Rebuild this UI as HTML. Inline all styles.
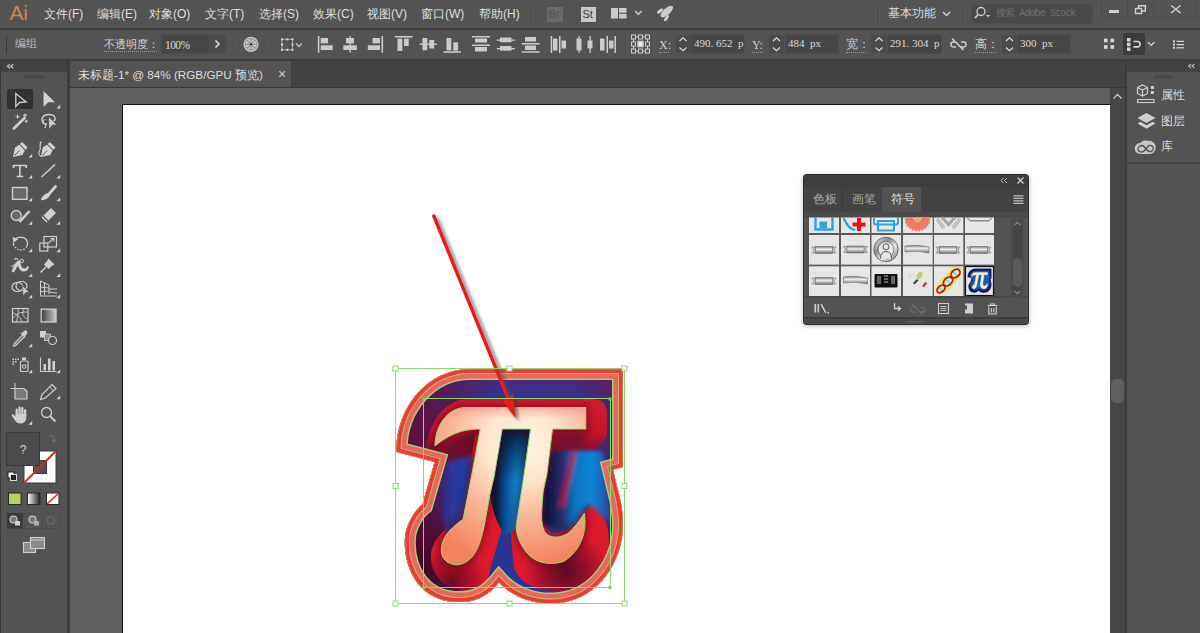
<!DOCTYPE html>
<html><head><meta charset="utf-8">
<style>
*{margin:0;padding:0;box-sizing:border-box}
html,body{width:1200px;height:633px;overflow:hidden;background:#535353;font-family:"Liberation Sans",sans-serif;color:#d6d6d6}
.a{position:absolute}
.t{position:absolute;white-space:nowrap;line-height:1}
.mi{top:8px;font-size:12px;color:#dedede}
.cl{top:38px;font-size:12px;color:#d2d2d2}
.fld{position:absolute;top:35px;height:18px;background:#464646;border-radius:2px;box-shadow:0 0 0 1px #4c4c4c}
.spin{position:absolute;top:35px;height:18px;width:15px;background:#4a4a4a;border-radius:2px 0 0 2px}
.ft{position:absolute;top:3px;left:2px;font-size:11px;color:#dadada;font-family:"Liberation Serif",serif;white-space:pre;line-height:1}
.fld{overflow:hidden}
.sep{position:absolute;top:33px;width:1px;height:22px;background:#585858}
</style></head><body>
<!-- base blocks -->
<div class="a" style="left:0;top:0;width:1200px;height:28px;background:#535353"></div>
<div class="a" style="left:0;top:28px;width:1200px;height:2px;background:#3f3f3f"></div>
<div class="a" style="left:0;top:30px;width:1200px;height:29px;background:#535353"></div>
<div class="a" style="left:0;top:59px;width:1200px;height:1px;background:#404040"></div>
<div class="a" style="left:0;top:60px;width:67px;height:573px;background:#535353"></div>
<div class="a" style="left:0;top:60px;width:67px;height:12px;background:#434343"></div>
<div class="a" style="left:67px;top:60px;width:3px;height:573px;background:#3c3c3c"></div>
<div class="a" style="left:70px;top:60px;width:1057px;height:28px;background:#434343"></div>
<div class="a" style="left:70px;top:60px;width:221px;height:27px;background:#535353"></div>
<div class="a" style="left:70px;top:87px;width:1057px;height:1px;background:#383838"></div>
<div class="a" style="left:70px;top:88px;width:1040px;height:545px;background:#5e5e5e"></div>
<div class="a" style="left:0;top:60px;width:1px;height:573px;background:#3c3c3c"></div>
<div class="a" style="left:4px;top:72px;width:1px;height:561px;background:#585858"></div>
<div class="a" style="left:122px;top:104px;width:988px;height:529px;background:#fff;border-left:1px solid #111;border-top:1px solid #111"></div>
<div class="a" style="left:1110px;top:88px;width:15px;height:545px;background:#464646"></div>
<div class="a" style="left:1111px;top:379px;width:13px;height:24px;background:#5f5f5f;border-radius:5px"></div>
<div class="a" style="left:1125px;top:60px;width:2px;height:573px;background:#3c3c3c"></div>
<div class="a" style="left:1127px;top:60px;width:73px;height:573px;background:#535353"></div>
<div class="a" style="left:1127px;top:60px;width:73px;height:12px;background:#434343"></div>
<div class="a" style="left:1127px;top:162px;width:73px;height:2px;background:#454545"></div>
<div class="a" style="left:0;top:59px;width:1200px;height:2px;background:#3d3d3d"></div>

<!-- MENU BAR -->
<div class="t" style="left:9.5px;top:1.5px;font-size:21px;color:#d0844f;letter-spacing:-0.3px">Ai</div>
<div class="t mi" style="left:44px">文件(F)</div>
<div class="t mi" style="left:97px">编辑(E)</div>
<div class="t mi" style="left:149px">对象(O)</div>
<div class="t mi" style="left:205px">文字(T)</div>
<div class="t mi" style="left:259px">选择(S)</div>
<div class="t mi" style="left:313px">效果(C)</div>
<div class="t mi" style="left:367px">视图(V)</div>
<div class="t mi" style="left:421px">窗口(W)</div>
<div class="t mi" style="left:479px">帮助(H)</div>
<div class="a" style="left:531px;top:4px;width:1px;height:20px;background:#4a4a4a"></div><div class="a" style="left:532px;top:4px;width:1px;height:20px;background:#5a5a5a"></div>
<div class="a" style="left:547px;top:7px;width:16px;height:15px;background:#686868"></div>
<div class="t" style="left:548.5px;top:9px;font-size:11px;color:#505050">Br</div>
<div class="a" style="left:581px;top:7px;width:15px;height:15px;background:#c9c9c9"></div>
<div class="t" style="left:582.5px;top:9px;font-size:11px;color:#3c3c3c">St</div>
<div class="a" style="left:878px;top:4px;width:1px;height:20px;background:#4a4a4a"></div><div class="a" style="left:879px;top:4px;width:1px;height:20px;background:#5a5a5a"></div>
<div class="t mi" style="left:888px;top:7px;font-size:12px">基本功能</div>
<div class="a" style="left:963px;top:4px;width:1px;height:20px;background:#4a4a4a"></div><div class="a" style="left:964px;top:4px;width:1px;height:20px;background:#5a5a5a"></div>
<div class="a" style="left:972px;top:5px;width:120px;height:18px;background:#494949;border-radius:2px;box-shadow:0 0 0 1px #4e4e4e"></div>
<div class="t" style="left:996px;top:8.5px;font-size:10px;color:#707070;font-family:'Liberation Mono',monospace;letter-spacing:-0.9px">搜索 Adobe Stock</div>
<div class="a" style="left:1101px;top:0;width:96px;height:18px;border:1px solid #4b4b4b;border-top:none;border-radius:0 0 3px 3px"></div>
<div class="a" style="left:1127px;top:0;width:1px;height:17px;background:#4b4b4b"></div>
<div class="a" style="left:1153px;top:0;width:1px;height:17px;background:#4b4b4b"></div>

<!-- CONTROL BAR -->
<div class="a" style="left:6px;top:36px;width:1px;height:18px;background:#3c3c3c"></div>
<div class="t cl" style="left:15px;top:37.5px;font-size:11px;color:#bdbdbd">编组</div>
<div class="sep" style="left:93px"></div>
<div class="t cl" style="left:104px;top:39px;font-size:11px">不透明度：</div>
<div class="a" style="left:104px;top:51px;width:53px;height:0;border-top:1px dotted #9a9a9a"></div>
<div class="fld" style="left:162px;width:47px"></div>
<div class="t" style="left:165px;top:39.5px;font-size:11.5px;color:#d8d8d8;font-family:'Liberation Serif',serif;letter-spacing:-0.6px">100%</div>
<div class="a" style="left:209px;top:35px;width:17px;height:18px;background:#4b4b4b;border-radius:0 2px 2px 0"></div>
<div class="sep" style="left:235px"></div>
<div class="sep" style="left:268px"></div>

<div class="t cl" style="left:659px;top:39px;font-family:'Liberation Serif',serif;font-size:12px">X:</div>
<div class="a" style="left:659px;top:52px;width:10px;border-top:1px dotted #9a9a9a"></div>
<div class="spin" style="left:676px"></div>
<div class="fld" style="left:692px;width:52px"><div class="ft">490. 652  p</div></div>
<div class="t cl" style="left:752px;top:39px;font-family:'Liberation Serif',serif;font-size:12px">Y:</div>
<div class="a" style="left:752px;top:52px;width:11px;border-top:1px dotted #9a9a9a"></div>
<div class="spin" style="left:769px"></div>
<div class="fld" style="left:786px;width:52px"><div class="ft">484  px</div></div>
<div class="t cl" style="left:846px">宽：</div>
<div class="a" style="left:846px;top:52px;width:20px;border-top:1px dotted #9a9a9a"></div>
<div class="spin" style="left:871px"></div>
<div class="fld" style="left:888px;width:53px"><div class="ft">291. 304  p</div></div>
<div class="t cl" style="left:975px">高：</div>
<div class="a" style="left:975px;top:52px;width:21px;border-top:1px dotted #9a9a9a"></div>
<div class="spin" style="left:1002px"></div>
<div class="fld" style="left:1018px;width:52px"><div class="ft">300  px</div></div>
<div class="a" style="left:1123px;top:33px;width:22px;height:22px;background:#3b3b3b;border-radius:2px"></div>

<!-- TAB -->
<div class="t" style="left:278px;top:67px;font-size:14px;color:#d0d0d0">×</div>
<div class="t" style="left:78px;top:69px;font-size:11.7px;color:#dedede">未标题-1* @ 84% (RGB/GPU 预览)</div>


<div class="t" style="left:1161px;top:89px;font-size:12px;color:#dcdcdc">属性</div>
<div class="t" style="left:1161px;top:115px;font-size:12px;color:#dcdcdc">图层</div>
<div class="t" style="left:1161px;top:140px;font-size:12px;color:#dcdcdc">库</div>


<!-- SYMBOLS PANEL -->
<div class="a" style="left:803px;top:174px;width:226px;height:151px;background:#2e2e2e;border-radius:4px;box-shadow:0 1px 4px rgba(0,0,0,0.3)"></div>
<div class="a" style="left:804px;top:175px;width:224px;height:149px;background:#535353;border-radius:3px;overflow:hidden">
  <div class="a" style="left:0;top:0;width:226px;height:13px;background:#3e3e3e"></div>
  <div class="a" style="left:0;top:12px;width:226px;height:25px;background:#434343"></div>
  <div class="a" style="left:0;top:12px;width:39px;height:25px;background:#444"></div>
  <div class="a" style="left:38px;top:12px;width:1px;height:25px;background:#3a3a3a"></div>
  <div class="a" style="left:39px;top:12px;width:39px;height:25px;background:#444"></div>
  <div class="a" style="left:78px;top:12px;width:39px;height:26px;background:#535353"></div>
  <div class="a" style="left:0;top:37px;width:226px;height:6px;background:#4a4a4a"></div>
  <div class="a" style="left:0;top:121px;width:226px;height:2px;background:#474747"></div>
  <div class="a" style="left:0;top:142px;width:226px;height:2px;background:#3e3e3e"></div>
  <div class="a" style="left:0;top:144px;width:226px;height:6px;background:#4a4a4a"></div>
  <div class="a" style="left:207px;top:44px;width:12px;height:78px;background:#4b4b4b;box-shadow:0 0 0 1px #505050"></div>
  <div class="a" style="left:209px;top:50px;width:9px;height:66px;background:#454545;border-radius:4px"></div>
  <div class="a" style="left:209px;top:83px;width:9px;height:29px;background:#5a5a5a;border-radius:4.5px"></div>
</div>
<div class="t" style="left:813px;top:193px;font-size:12px;color:#a9a9a9">色板</div>
<div class="t" style="left:852px;top:193px;font-size:12px;color:#a9a9a9">画笔</div>
<div class="t" style="left:891px;top:193px;font-size:12px;color:#e2e2e2">符号</div>

<!-- ICON OVERLAY -->
<svg class="a" style="left:0;top:0" width="1200" height="633" viewBox="0 0 1200 633">
<g id="icons" fill="none" stroke="#cfcfcf" stroke-width="1.5">
<!-- menubar icons -->
<g fill="#cccccc" stroke="none">
<rect x="611" y="8" width="7" height="10.5"/>
<rect x="619" y="8" width="7.5" height="4.7"/>
<rect x="619" y="13.8" width="7.5" height="4.7"/>
<ellipse cx="666.8" cy="11.5" rx="7.8" ry="3.4" transform="rotate(-42 666.8 11.5)"/>
<ellipse cx="660" cy="11" rx="3.6" ry="1.5" transform="rotate(-40 660 11)"/>
<ellipse cx="666.5" cy="18.2" rx="3.6" ry="1.5" transform="rotate(-55 666.5 18.2)"/>
</g>
<polyline points="635,11 638.3,14.3 641.6,11" stroke="#d0d0d0" stroke-width="1.4"/>
<polyline points="943,12 946.5,15.5 950,12" stroke="#d0d0d0" stroke-width="1.5"/>
<circle cx="981" cy="11.5" r="4" stroke="#c8c8c8" stroke-width="1.4"/>
<line x1="978" y1="14.5" x2="975" y2="18" stroke="#c8c8c8" stroke-width="1.8"/>
<path d="M986 15 l4 0 l-2 2.5z" fill="#c8c8c8" stroke="none"/>
<rect x="1109" y="10" width="10" height="3" fill="#cfcfcf" stroke="none"/>
<rect x="1135.5" y="8.5" width="6" height="5" stroke="#cfcfcf" stroke-width="1.4"/>
<path d="M1138.5 8.5 V5.7 H1145.3 V11 H1141.5" stroke="#cfcfcf" stroke-width="1.4"/>
<path d="M1171 5.5 L1180.5 13 M1180.5 5.5 L1171 13" stroke="#d0d0d0" stroke-width="1.5"/>



<!-- ARTWORK -->
<g stroke="none" fill="none" id="art">
<defs>
<linearGradient id="body" x1="396" y1="0" x2="623" y2="0" gradientUnits="userSpaceOnUse">
<stop offset="0" stop-color="#660c2c"/><stop offset="0.2" stop-color="#521a56"/><stop offset="0.45" stop-color="#2e3496"/><stop offset="0.8" stop-color="#2e3490"/><stop offset="1" stop-color="#5a1c58"/>
</linearGradient>
<linearGradient id="bodyv" x1="0" y1="369" x2="0" y2="400" gradientUnits="userSpaceOnUse">
<stop offset="0" stop-color="#6a1e5a" stop-opacity="0.7"/><stop offset="1" stop-color="#6a1e5a" stop-opacity="0"/>
</linearGradient>
<radialGradient id="bodydark" cx="420" cy="570" r="85" gradientUnits="userSpaceOnUse">
<stop offset="0" stop-color="#3a0414" stop-opacity="0.75"/><stop offset="1" stop-color="#3a0414" stop-opacity="0"/>
</radialGradient>
<radialGradient id="letter" cx="522" cy="445" r="120" gradientUnits="userSpaceOnUse">
<stop offset="0" stop-color="#fff6e6"/><stop offset="0.3" stop-color="#fde6cc"/><stop offset="0.62" stop-color="#f9b494"/><stop offset="1" stop-color="#f4845e"/>
</radialGradient>
<linearGradient id="barpink" x1="0" y1="407" x2="0" y2="430" gradientUnits="userSpaceOnUse">
<stop offset="0" stop-color="#f88a84" stop-opacity="0.55"/><stop offset="0.5" stop-color="#f88a84" stop-opacity="0"/>
</linearGradient>
<linearGradient id="cnt1" x1="496" y1="0" x2="530" y2="0" gradientUnits="userSpaceOnUse">
<stop offset="0" stop-color="#0a1838"/><stop offset="0.25" stop-color="#0a4a90"/><stop offset="0.6" stop-color="#0a86d2"/><stop offset="1" stop-color="#0a90da"/>
</linearGradient>
<linearGradient id="cnt1v" x1="0" y1="429" x2="0" y2="480" gradientUnits="userSpaceOnUse">
<stop offset="0" stop-color="#06102a" stop-opacity="0.9"/><stop offset="1" stop-color="#06102a" stop-opacity="0"/>
</linearGradient>
<linearGradient id="cnt2" x1="546" y1="0" x2="612" y2="0" gradientUnits="userSpaceOnUse">
<stop offset="0" stop-color="#0a1640"/><stop offset="0.25" stop-color="#2a2a6a"/><stop offset="0.42" stop-color="#0a70c0"/><stop offset="0.7" stop-color="#0a8ad8"/><stop offset="1" stop-color="#34389a"/>
</linearGradient>
<linearGradient id="cnt3" x1="436" y1="0" x2="476" y2="0" gradientUnits="userSpaceOnUse">
<stop offset="0" stop-color="#3a1a6a"/><stop offset="0.4" stop-color="#2a3898"/><stop offset="0.8" stop-color="#1e3ca8"/><stop offset="1" stop-color="#8a1a40"/>
</linearGradient>
<path id="SIL" d="M396.4 452 L396.5 450 C396.5 405.3 429.4 369 470 369 L623 369 L623 467 L613 469.7 L618 490.6 C622 505 623 515 623 525 C623 560 600 598 560 603 C535 606 512 597 499 582.5 C487 597 475 603 455 602 C420 600 404 570 404.8 540 C405 525 415 510 422.3 504.5 L434.6 462 Z"/>
<path id="PI" d="M466 407.5 L585.8 407.5 L585.8 429 L552.5 429 L546.8 475 L543.3 490.5 C541.5 510 540 525 545 532 C550 540 565 538 572 529.6 C578 523 582 517 584.4 513.1 C587 530 582 550 563.8 561.4 C550 566 535 563 527 553 C518 542 515 530 516.6 523.4 L524 475 L530.5 429 L502.2 429 L494.4 475 L489.9 494.7 C486 515 483 540 475.5 552 C470 562 460 566 453.9 564.5 C445 563 440 556 441.6 548 C442 535 455 525 463.1 519.3 L471.7 475 L480.2 429 C470 429 460 431 452 435 C445 438 440 442 435 446 C435 425 448 407.5 466 407.5 Z"/>
<clipPath id="silclip"><use href="#SIL"/></clipPath>
<filter id="blur3" x="-20%" y="-20%" width="140%" height="140%"><feGaussianBlur stdDeviation="3"/></filter>
<filter id="blur25" x="-30%" y="-30%" width="160%" height="160%"><feGaussianBlur stdDeviation="2.2"/></filter>
<filter id="blur2" x="-20%" y="-20%" width="140%" height="140%"><feGaussianBlur stdDeviation="1.6"/></filter>
</defs>
<g clip-path="url(#silclip)">
<rect x="390" y="360" width="240" height="250" fill="url(#body)"/>
<rect x="390" y="360" width="240" height="50" fill="url(#bodyv)"/>
<rect x="390" y="360" width="240" height="250" fill="url(#bodydark)"/>
<!-- red shadow -->
<defs>
<radialGradient id="lfsg" cx="452" cy="582" r="36" gradientUnits="userSpaceOnUse"><stop offset="0" stop-color="#6a0a24"/><stop offset="0.5" stop-color="#a8102a"/><stop offset="1" stop-color="#dc1a2c"/></radialGradient>
<radialGradient id="rfsg" cx="566" cy="572" r="42" gradientUnits="userSpaceOnUse"><stop offset="0" stop-color="#5a0a24"/><stop offset="0.5" stop-color="#96102c"/><stop offset="1" stop-color="#dc1a2c"/></radialGradient>
<linearGradient id="bsg" x1="0" y1="400" x2="0" y2="455" gradientUnits="userSpaceOnUse"><stop offset="0" stop-color="#d81a2c"/><stop offset="0.6" stop-color="#c0162c"/><stop offset="1" stop-color="#7a0c2c"/></linearGradient>
</defs>
<use href="#PI" fill="#d41a2c" stroke="#d41a2c" stroke-width="8" stroke-linejoin="round"/>
<path d="M428 466 C421 440 436 399 470 399 L592 399 Q607 399 607 414 L607 436 L596 450 L575 452 L553 453 L552 429 L480 429 L472 468 Z" fill="url(#bsg)"/>
<path d="M440 456 C446 446 456 438 472 433 L480 433 L476 458 L446 464 Z" fill="#6a0a2a" filter="url(#blur25)"/>
<path d="M556 432 L586 432 L584 450 L553 452 Z" fill="#6a0c30" filter="url(#blur3)" opacity="0.7"/>
<path d="M476 432 L467 478 L458 520 C445 528 432 540 431 555 C430 575 445 591 470 591 C482 591 488 585 491 566 L506 535 L489.9 494.7 L494 475 Z" fill="url(#lfsg)"/>
<path d="M584.4 513.1 L592 503 C603 508 609 522 609 545 C609 570 596 591 560 591 C538 591 520 585 513 566 L506 535 L516.6 523.4 L560 550 Z" fill="url(#rfsg)"/>
<path d="M503 525 L510 525 L514 570 L490 570 Z" fill="#2a3494"/>
<!-- counters -->
<g filter="url(#blur25)">
<path d="M551 451 L603 451 L612 525 L596 510 C591 502 587 504 584 512 C579 521 573 528 563 531 L541 524 L543 490 Z" fill="url(#cnt2)"/>
<path d="M574 452 L561 508" stroke="#b8163a" stroke-width="5" opacity="0.85"/>
<path d="M447 462 L474 455 L466 505 L460 524 L447 534 L439 505 Z" fill="url(#cnt3)"/>
</g>
<path d="M502.2 429 L530.5 429 L524 475 L516.6 523.4 C515 530 512 533 506 535 C500 530 493 515 489.9 494.7 L494.4 475 Z" fill="url(#cnt1)"/>
<path d="M502.2 429 L530.5 429 L524 475 L516.6 523.4 C515 530 512 533 506 535 C500 530 493 515 489.9 494.7 L494.4 475 Z" fill="url(#cnt1v)"/>
<use href="#PI" fill="none" stroke="#4a0618" stroke-width="7" filter="url(#blur3)" opacity="0.45"/>
<!-- outer bands -->
<use href="#SIL" fill="none" stroke="#9ad27a" stroke-width="22"/>
<use href="#SIL" fill="none" stroke="#ee645c" stroke-width="19"/>
<use href="#SIL" fill="none" stroke="#a8cc78" stroke-width="10"/>
<use href="#SIL" fill="none" stroke="#f23a30" stroke-width="8.2"/>
<use href="#SIL" fill="none" stroke="#8fd67a" stroke-width="1" opacity="0.6"/>
</g>
<use href="#PI" fill="url(#letter)"/>
<use href="#PI" fill="url(#barpink)"/>
<use href="#PI" fill="none" stroke="#8ede6c" stroke-width="1"/>
<!-- arrow -->
<g filter="url(#blur2)" opacity="0.6">
<line x1="437.5" y1="219" x2="513" y2="402" stroke="#4a5058" stroke-width="3.5" stroke-linecap="round"/>
<path d="M519 422 L504.5 403 L516.5 398 Z" fill="#3a3a3a"/>
</g>
<line x1="433.8" y1="216" x2="508" y2="398" stroke="#ee1a16" stroke-width="3.4" stroke-linecap="round"/>
<path d="M515.5 418 L501.3 399.4 L512.9 394.2 Z" fill="#ee1a16"/>
<!-- selection -->
<g stroke="#85dc6e" stroke-width="1" fill="none">
<rect x="395.5" y="368.5" width="229" height="235"/>
<rect x="423.5" y="398.5" width="187" height="189"/>
</g>
<g fill="#ffffff" stroke="#85dc6e" stroke-width="1">
<rect x="393" y="366" width="5" height="5"/><rect x="507" y="366" width="5" height="5"/><rect x="622" y="366" width="5" height="5"/>
<rect x="393" y="483.5" width="5" height="5"/><rect x="622" y="483.5" width="5" height="5"/>
<rect x="393" y="601" width="5" height="5"/><rect x="507" y="601" width="5" height="5"/><rect x="622" y="601" width="5" height="5"/>
</g>
<g fill="#6fd855" stroke="none">
<rect x="422.5" y="397.5" width="3" height="3"/><rect x="608.5" y="397.5" width="3" height="3"/><rect x="422.5" y="586" width="3" height="3"/><rect x="608.5" y="586" width="3" height="3"/>
</g>
</g>
<!-- TOOLS PANEL -->
<g fill="#484848" stroke="none"><rect x="24" y="75.5" width="20" height="3"/></g>
<path d="M10 64.3 l-2.6 2 l2.6 2 M13.3 64.3 l-2.6 2 l2.6 2" stroke="#c8c8c8" stroke-width="1.1"/>
<path d="M1191 64.3 l-2.4 1.8 l2.4 1.8 M1194.4 64.3 l-2.4 1.8 l2.4 1.8" stroke="#c8c8c8" stroke-width="1.1"/>
<rect x="1154" y="75.5" width="19" height="3" fill="#484848" stroke="none"/>
<rect x="7" y="89" width="26" height="20" rx="2" fill="#323232" stroke="none"/>
<path d="M15.8 93.5 L26.2 102 L19.5 102.5 L15.8 106.5 Z" stroke="#cfcfcf" stroke-width="1.3" stroke-linejoin="miter"/>
<g fill="#d0d0d0" stroke="none">
<path d="M43.5 91 L55 102.2 L48.2 102.2 L43.5 107 Z"/>
<!-- small triangles -->
<path d="M60.2 104.8 V108.6 H56.4 Z"/>
<path d="M32.2 153.8 V157.6 H28.4 Z"/>
<path d="M32.2 174.8 V178.6 H28.4 Z"/><path d="M60.2 174.8 V178.6 H56.4 Z"/>
<path d="M32.2 197.5 V201.3 H28.4 Z"/><path d="M60.2 197.5 V201.3 H56.4 Z"/>
<path d="M32.2 221 V224.8 H28.4 Z"/><path d="M60.2 221 V224.8 H56.4 Z"/>
<path d="M32.2 248.5 V252.3 H28.4 Z"/><path d="M60.2 248.5 V252.3 H56.4 Z"/>
<path d="M32.2 273.3 V277.1 H28.4 Z"/><path d="M60.2 273.3 V277.1 H56.4 Z"/>
<path d="M32.2 294.5 V298.3 H28.4 Z"/><path d="M60.2 294.5 V298.3 H56.4 Z"/>
<path d="M32.2 343.5 V347.3 H28.4 Z"/>
<path d="M32.2 369.5 V373.3 H28.4 Z"/><path d="M60.2 369.5 V373.3 H56.4 Z"/>
<path d="M60.2 395.5 V399.3 H56.4 Z"/>
<path d="M32.2 421 V424.8 H28.4 Z"/>
</g>
<!-- magic wand -->
<line x1="13.8" y1="128.5" x2="24.5" y2="118" stroke="#d0d0d0" stroke-width="2.6" stroke-linecap="round"/>
<g stroke="#d0d0d0" stroke-width="1.1"><path d="M17.5 114.8 v4 M15.5 116.8 h4 M25 113.3 v4 M23 115.3 h4 M26.3 119.8 v3 M24.8 121.3 h3"/></g>
<!-- lasso -->
<path d="M47 124 C40 124 40 115 48.5 114.5 C55 114.2 57 119 53 121.5" stroke="#cfcfcf" stroke-width="1.3"/>
<path d="M45.5 119.5 c-3 0 -3.5 4 -1 4.5 c2 .5 1.5 3 0 4" stroke="#cfcfcf" stroke-width="1.1"/>
<path d="M48.5 116.5 L57 125 L52.5 125 L49 129.5 Z" fill="#d0d0d0" stroke="#535353" stroke-width="0.8"/>
<!-- pen -->
<g fill="#d2d2d2" stroke="none">
<path d="M22 142 L27.6 147.6 L25.5 149.7 L19.9 144.1 Z"/>
<path d="M19.2 144.8 L24.8 150.4 L22.5 155 L13 157 L15 147.5 Z"/>
<path d="M49.8 142 L55.4 147.6 L53.3 149.7 L47.7 144.1 Z"/>
<path d="M47 144.8 L52.6 150.4 L50.3 155 L40.8 157 L42.8 147.5 Z"/>
</g>
<path d="M14.5 155.5 L19.5 150.5" stroke="#535353" stroke-width="1"/>
<path d="M42.3 155.5 L47.3 150.5" stroke="#535353" stroke-width="1"/>
<path d="M41.5 141.5 C38 144 42 148 39.5 151 C37.5 154 40 156.5 42 156" stroke="#cfcfcf" stroke-width="1.1"/>
<!-- type -->
<path d="M13.5 165.5 H26.3 M19.9 165.5 V176.5 M16.6 176.5 H23.2 M13.5 165 V168 M26.3 165 V168" stroke="#d2d2d2" stroke-width="1.6"/>
<!-- line -->
<line x1="41.5" y1="177" x2="55" y2="164.5" stroke="#d0d0d0" stroke-width="1.5"/>
<!-- rect -->
<rect x="12.5" y="187.5" width="14.5" height="11.8" fill="#6a6a6a" stroke="#d0d0d0" stroke-width="1.4"/>
<!-- brush -->
<path d="M55.5 186.5 L49 194" stroke="#d0d0d0" stroke-width="2.8" stroke-linecap="round"/>
<path d="M47.8 193 L50 195.2 C48.5 198.5 45 200 40.8 200.3 C41.5 197 43.5 194.5 47.8 193 Z" fill="#d0d0d0" stroke="none"/>
<!-- shaper -->
<circle cx="16.2" cy="215.5" r="5" fill="#6a6a6a" stroke="#cfcfcf" stroke-width="1.3"/>
<path d="M29.5 211 L19.5 222" stroke="#d0d0d0" stroke-width="2.6"/>
<!-- eraser -->
<path d="M51 208 L56 213 L46.5 222.5 L41.5 217.5 Z" fill="#d0d0d0" stroke="none"/>
<path d="M43 216 L48 221" stroke="#535353" stroke-width="1.2"/>
<!-- rotate -->
<path d="M15.5 239 C20 235.5 27.5 237.5 27.5 243.5 C27.5 249 21 252 16.5 248.5 C14 246.5 13 244.5 13.5 242.5" stroke="#cfcfcf" stroke-width="1.3" stroke-dasharray="20 2 1.5 1.5 1.5 1.5 1.5 1.5 1.5 1.5"/>
<path d="M12.5 236.8 L18 239.2 L13.5 242.8 Z" fill="#d0d0d0" stroke="none"/>
<!-- scale -->
<rect x="39.8" y="243" width="8" height="8" stroke="#cfcfcf" stroke-width="1.2"/>
<rect x="44" y="236.5" width="12.5" height="10.5" stroke="#cfcfcf" stroke-width="1.2"/>
<path d="M48.5 243 L53.5 238.5 M50.5 238.5 H53.8 V241.8" stroke="#cfcfcf" stroke-width="1.1"/>
<!-- width tool -->
<path d="M11.5 271.5 C13 268 14.5 263 17.5 261 C19 260 20.5 261 20.5 262.5 C20.5 265 22 268.5 24.5 268.5 C26 268.5 26.5 267.5 27.5 266 L29 267 C28 270 26.5 271.5 24 271.5 C20.5 271.5 18.5 268 18 265.5 C16.5 267 15.5 270 14 272.5 Z" fill="#d0d0d0" stroke="none"/>
<path d="M14.5 259.5 C15.5 258.3 17.5 258.5 18.2 259.8" stroke="#cfcfcf" stroke-width="1.2"/>
<circle cx="21.8" cy="261" r="1.7" fill="#535353" stroke="#d0d0d0" stroke-width="1"/>
<path d="M11 266.5 L20 262.5" stroke="#d0d0d0" stroke-width="1"/>
<!-- puppet pin -->
<path d="M48.5 258.5 L54.5 264.5 L52.5 265.5 L48.5 269 L47 267.5 L44 264.5 L47.5 260.5 Z" fill="#d0d0d0" stroke="none"/>
<path d="M46 267 L40.5 272.5" stroke="#d0d0d0" stroke-width="1.4"/>


<!-- shape builder -->
<ellipse cx="17.5" cy="287" rx="5.5" ry="4.5" stroke="#cfcfcf" stroke-width="1.2"/>
<ellipse cx="21.5" cy="286" rx="5.5" ry="4.5" stroke="#cfcfcf" stroke-width="1.2"/>
<path d="M22.5 285.5 L29.5 292.5 L25.8 292.5 L23 296 Z" fill="#d0d0d0" stroke="#535353" stroke-width="0.7"/>
<!-- perspective grid -->
<path d="M40.5 281 V296 H57 M40.5 281 L49 285 V294 M40.5 287 L49 288 M40.5 291.5 L49 291 M44.5 283 V295 M49 289 L57 289 M49 292 L57 293" stroke="#cfcfcf" stroke-width="1"/>
<!-- mesh -->
<rect x="12.5" y="308.5" width="15.5" height="13.5" stroke="#cfcfcf" stroke-width="1.2"/>
<path d="M13 318 C17 314 19 312 27 312 M13 313 C17 314 21 318 22 322 M18 309 C19 313 17 318 16.5 322 M24 309 C22 313 22 316 27 319" stroke="#cfcfcf" stroke-width="0.9"/>
<!-- gradient -->
<defs><linearGradient id="tg" x1="0" x2="1"><stop offset="0" stop-color="#3f3f3f"/><stop offset="1" stop-color="#c8c8c8"/></linearGradient></defs>
<rect x="41.2" y="309.2" width="14.8" height="12.8" fill="url(#tg)" stroke="#d0d0d0" stroke-width="1.3"/>
<!-- eyedropper -->
<path d="M25.5 330 C27.5 331 28 333 26.5 334.5 L24.5 336.5 L21.5 333.5 L23.5 331.5 Z" fill="#d0d0d0" stroke="none"/>
<path d="M21 333 L25 337 M22.8 335 L14.5 343.5 C13.5 344.8 13 345.5 13.5 346 C14 346.5 14.8 346 16 345 L24.5 336.8" stroke="#cfcfcf" stroke-width="1.2"/>
<!-- blend -->
<rect x="40" y="331" width="6" height="6.5" fill="#d0d0d0" stroke="none"/>
<rect x="44.5" y="334" width="6" height="6.5" fill="#8a8a8a" stroke="#cfcfcf" stroke-width="0.9"/>
<circle cx="52.5" cy="340.5" r="4" fill="#535353" stroke="#d0d0d0" stroke-width="1.2"/>
<!-- symbol sprayer -->
<g fill="#cfcfcf" stroke="none"><rect x="12.5" y="358.5" width="1.5" height="1.5"/><rect x="15" y="358.5" width="1.5" height="1.5"/><rect x="17.5" y="358.5" width="1.5" height="1.5"/><rect x="12.5" y="361" width="1.5" height="1.5"/><rect x="15" y="361" width="1.5" height="1.5"/><rect x="12.5" y="363.5" width="1.5" height="1.5"/><rect x="22" y="357.5" width="4" height="2.5"/></g>
<rect x="20.5" y="361" width="7.5" height="10.5" rx="1" stroke="#cfcfcf" stroke-width="1.2"/>
<circle cx="24.2" cy="366.5" r="1.8" stroke="#cfcfcf" stroke-width="1.1"/>
<!-- graph -->
<path d="M40.5 357.5 V371.5 H56.5" stroke="#cfcfcf" stroke-width="1.1"/>
<g fill="#cfcfcf" stroke="none"><rect x="43.5" y="364" width="2.5" height="6.5"/><rect x="48" y="358.5" width="2.5" height="12"/><rect x="52.5" y="361" width="2.5" height="9.5"/></g>
<!-- artboard -->
<path d="M15 383 V388.5 M10.5 388.5 H15" stroke="#cfcfcf" stroke-width="1.1"/>
<path d="M15 388.5 H24 L27 391.5 V399 H15 Z" fill="#7a7a7a" stroke="#cfcfcf" stroke-width="1.2"/>
<!-- slice/knife -->
<path d="M52 384.5 L56 388.5 L45.5 398 L40.5 399.5 L42 394.5 Z" stroke="#cfcfcf" stroke-width="1.2"/>
<path d="M49.5 387 L53.5 391" stroke="#cfcfcf" stroke-width="1"/>
<!-- hand -->
<g fill="#d0d0d0" stroke="none">
<rect x="15.6" y="408.5" width="2.3" height="8" rx="1.15"/>
<rect x="18.4" y="406.5" width="2.3" height="9" rx="1.15"/>
<rect x="21.2" y="407" width="2.3" height="9" rx="1.15"/>
<rect x="24" y="409" width="2.3" height="8" rx="1.15"/>
<path d="M15.6 414 H26.3 V417.5 C26.3 421 24 423.5 20.5 423.5 C18 423.5 16.5 422.5 15 420.5 L11.8 415.8 C11.2 414.8 12.4 413.6 13.4 414.4 L15.6 416.5 Z"/>
</g>
<!-- zoom -->
<circle cx="46.5" cy="412.5" r="5" stroke="#cfcfcf" stroke-width="1.3"/>
<line x1="50" y1="416" x2="55.5" y2="421.5" stroke="#cfcfcf" stroke-width="1.8"/>
<!-- group separators -->


<!-- FILL / STROKE -->
<rect x="24" y="451" width="32" height="32" fill="#ffffff" stroke="#3a3a3a" stroke-width="1"/>
<rect x="33.5" y="460.5" width="13" height="13" fill="#535353" stroke="#3a3a3a" stroke-width="1"/>
<line x1="24.5" y1="482.5" x2="55.5" y2="451.5" stroke="#e02424" stroke-width="2"/>
<rect x="6.5" y="432.5" width="33" height="33" fill="#4b4b4b" stroke="#3a3a3a" stroke-width="1"/>
<text x="23" y="453.5" font-size="12" fill="#d0d0d0" stroke="none" text-anchor="middle" font-family="Liberation Sans">?</text>
<path d="M49 436 l3 0 q2 0 2 2 l0 3 M52 440 l2 2 l2-2" stroke="#6f6f6f" stroke-width="1.1"/>
<rect x="8" y="472" width="6" height="6" fill="#fff" stroke="#222" stroke-width="1"/>
<rect x="10.5" y="474.5" width="6" height="6" fill="#222" stroke="#ddd" stroke-width="1"/>
<rect x="8.5" y="493" width="12.5" height="11.5" fill="#b3d26a" stroke="#2a2a2a" stroke-width="1"/>
<defs><linearGradient id="tg2" x1="0" x2="1"><stop offset="0" stop-color="#ffffff"/><stop offset="1" stop-color="#1e1e1e"/></linearGradient></defs>
<rect x="27.5" y="493" width="12.5" height="11.5" fill="url(#tg2)" stroke="#2a2a2a" stroke-width="1"/>
<rect x="46.5" y="493" width="12.5" height="11.5" fill="#fff" stroke="#2a2a2a" stroke-width="1"/>
<line x1="47" y1="504" x2="58.5" y2="493.5" stroke="#e02424" stroke-width="1.6"/>
<rect x="7" y="513" width="16" height="15.5" fill="#3a3a3a" stroke="none"/>
<rect x="24.5" y="513.5" width="18" height="15" fill="none" stroke="#4c4c4c" stroke-width="1"/>
<rect x="42.5" y="513.5" width="17" height="15" fill="none" stroke="#4c4c4c" stroke-width="1"/>
<g stroke="#cfcfcf" stroke-width="1.1">
<circle cx="13.5" cy="519.5" r="3.5" fill="#7a7a7a"/><rect x="15" y="521" width="5" height="4.5" fill="#d0d0d0" stroke="none"/>
<circle cx="32.5" cy="519.5" r="3.5" fill="#7a7a7a"/><rect x="34" y="521" width="5" height="4.5" fill="#b0b0b0" stroke="none"/>
</g>
<circle cx="51" cy="520.5" r="3.5" fill="none" stroke="#6a6a6a" stroke-width="1.1"/>
<rect x="23.5" y="542.5" width="12" height="10" fill="#8a8a8a" stroke="#cfcfcf" stroke-width="1.1"/>
<rect x="30.5" y="537.5" width="14" height="11" fill="#8a8a8a" stroke="#cfcfcf" stroke-width="1.1"/>
<line x1="31" y1="540" x2="44" y2="540" stroke="#cfcfcf" stroke-width="1"/>


<!-- RIGHT PANEL icons -->
<polyline points="1113.5,98.5 1117.5,94.5 1121.5,98.5" stroke="#c8c8c8" stroke-width="1.3"/>
<g stroke="#cfcfcf" stroke-width="1.2" fill="none">
<path d="M1137.5 87.5 L1142.5 85 L1147.5 87.5 V93.5 L1142.5 96 L1137.5 93.5 Z M1137.5 87.5 L1142.5 90 L1147.5 87.5 M1142.5 90 V96"/>
<rect x="1137.5" y="99.5" width="16.5" height="3" stroke-width="1.1"/>
</g>
<g fill="#cfcfcf" stroke="none">
<rect x="1150.8" y="86" width="3" height="3"/><rect x="1150.8" y="91" width="3" height="3"/>

<path d="M1137.5 118 L1146.5 113 L1155.5 118 L1146.5 123 Z"/>
<path d="M1137.5 123.5 L1140.5 121.8 L1146.5 125.2 L1152.5 121.8 L1155.5 123.5 L1146.5 128.7 Z"/>
</g>
<path d="M1141 154 C1136.5 154 1134.5 151 1134.8 148 C1135 145 1137.5 143 1140.5 143 C1142 140.5 1145 140 1147.5 141 C1149 140.5 1152 140.8 1154 143 C1156.5 146 1156.2 151 1153 153 C1151.5 154 1150 154 1148 154 Z" fill="#c6c6c6" stroke="none"/>
<path d="M1142.5 145.5 C1139.5 145.5 1138 147.5 1138 149 C1138 151 1140 152 1142 152 C1145 152 1147 146 1149.5 145.5 C1152 145 1153.5 147 1153.3 149 C1153 151 1151 152 1149 151.5 C1147 151 1145.5 147 1142.5 145.5 Z" fill="none" stroke="#555" stroke-width="1.4"/>


<!-- symbols panel svg -->
<path d="M1007 178 l-2.5 2.5 l2.5 2.5 M1003.5 178 l-2.5 2.5 l2.5 2.5" stroke="#bdbdbd" stroke-width="1"/>
<path d="M1017.5 177.5 l6 6 M1023.5 177.5 l-6 6" stroke="#cfcfcf" stroke-width="1.3"/>
<path d="M1013.5 195.8 h10 M1013.5 198.3 h10 M1013.5 200.8 h10 M1013.5 203.3 h10" stroke="#bdbdbd" stroke-width="1.2"/>
<rect x="809" y="217.5" width="185" height="78.5" fill="#5b5b5b" stroke="none"/>
<g fill="#e6e6e6" stroke="none">
<rect x="809" y="217.5" width="30" height="15.5"/><rect x="841" y="217.5" width="29" height="15.5"/><rect x="871.5" y="217.5" width="29.5" height="15.5"/><rect x="903" y="217.5" width="29.7" height="15.5"/><rect x="934" y="217.5" width="29.3" height="15.5"/><rect x="965" y="217.5" width="29" height="15.5"/>
<rect x="809" y="235" width="30" height="29.6"/><rect x="841" y="235" width="29" height="29.6"/><rect x="871.5" y="235" width="29.5" height="29.6"/><rect x="903" y="235" width="29.7" height="29.6"/><rect x="934" y="235" width="29.3" height="29.6"/><rect x="965" y="235" width="29" height="29.6"/>
<rect x="809" y="266.3" width="30" height="29.7"/><rect x="841" y="266.3" width="29" height="29.7"/><rect x="871.5" y="266.3" width="29.5" height="29.7"/><rect x="903" y="266.3" width="29.7" height="29.7"/><rect x="934" y="266.3" width="29.3" height="29.7"/><rect x="965" y="266.3" width="29" height="29.7"/>
</g>
<!-- row1 symbols -->
<path d="M815.5 217 V229.5 H832.5 V217" stroke="#2fa3dc" stroke-width="2.4"/>
<rect x="819.5" y="221.5" width="7.5" height="7" fill="#2fa3dc" stroke="none"/>
<path d="M843.5 218 C846 223 849 229 855 230" stroke="#2fa3dc" stroke-width="2.4"/>
<path d="M857 218 h4 v4.5 h4.5 v4 h-4.5 v4.5 h-4 v-4.5 h-4.5 v-4 h4.5 z" fill="#ee1010" stroke="none"/>
<path d="M874 217.5 v5 q0 2 2 2 h20 q2 0 2-2 v-5" stroke="#2fa3dc" stroke-width="2"/>
<rect x="878" y="221" width="16" height="9.5" stroke="#2fa3dc" stroke-width="2"/>
<g fill="#ef7a62" stroke="none"><ellipse cx="925.5" cy="219.5" rx="5" ry="1.8" transform="rotate(0 925.5 219.5)"/><ellipse cx="925.2" cy="221.5" rx="5" ry="1.8" transform="rotate(16 925.2 221.5)"/><ellipse cx="924.2" cy="223.3" rx="5" ry="1.8" transform="rotate(33 924.2 223.3)"/><ellipse cx="922.7" cy="224.8" rx="5" ry="1.8" transform="rotate(49 922.7 224.8)"/><ellipse cx="920.8" cy="225.9" rx="5" ry="1.8" transform="rotate(65 920.8 225.9)"/><ellipse cx="918.6" cy="226.4" rx="5" ry="1.8" transform="rotate(82 918.6 226.4)"/><ellipse cx="916.4" cy="226.4" rx="5" ry="1.8" transform="rotate(98 916.4 226.4)"/><ellipse cx="914.2" cy="225.9" rx="5" ry="1.8" transform="rotate(115 914.2 225.9)"/><ellipse cx="912.3" cy="224.8" rx="5" ry="1.8" transform="rotate(131 912.3 224.8)"/><ellipse cx="910.8" cy="223.3" rx="5" ry="1.8" transform="rotate(147 910.8 223.3)"/><ellipse cx="909.8" cy="221.5" rx="5" ry="1.8" transform="rotate(164 909.8 221.5)"/><ellipse cx="909.5" cy="219.5" rx="5" ry="1.8" transform="rotate(180 909.5 219.5)"/></g>
<circle cx="917.5" cy="219.5" r="2.5" fill="#e6b43c" stroke="none"/>
<path d="M937 219 L944 228 M960 219 L953 228 M942 217.5 L948.5 224.5 L955 217.5" stroke="#a7a7a7" stroke-width="3"/>
<path d="M937 219 L944 228 M960 219 L953 228" stroke="#dedede" stroke-width="1.2"/>
<path d="M967 217.5 l3 2.5 h19 l3 -2.5 v1 l-3 3 h-19 l-3 -3z" fill="#8a8a8a" stroke="none"/>


<defs>
<linearGradient id="rib" x1="0" y1="0" x2="1" y2="0">
<stop offset="0" stop-color="#8a8a8a"/><stop offset="0.25" stop-color="#f4f4f4"/><stop offset="0.5" stop-color="#9d9d9d"/><stop offset="0.75" stop-color="#ffffff"/><stop offset="1" stop-color="#8a8a8a"/>
</linearGradient>
<linearGradient id="ribv" x1="0" y1="0" x2="0" y2="1">
<stop offset="0" stop-color="#7a7a7a"/><stop offset="0.4" stop-color="#f0f0f0"/><stop offset="1" stop-color="#6a6a6a"/>
</linearGradient>
<g id="ribbon">
<path d="M0 1 L5 1 L5 7 L0 7 L2 4 Z" fill="#bdbdbd" stroke="#7a7a7a" stroke-width="0.6"/>
<path d="M24 1 L19 1 L19 7 L24 7 L22 4 Z" fill="#bdbdbd" stroke="#7a7a7a" stroke-width="0.6"/>
<rect x="3.5" y="0.5" width="17" height="7" fill="url(#ribv)" stroke="#6f6f6f" stroke-width="0.6"/>
</g>
<g id="ribbon2">
<path d="M0 1 Q12 -1 24 2 V8 Q12 5 0 7 Z" fill="url(#ribv)" stroke="#6f6f6f" stroke-width="0.6"/>
</g>
<radialGradient id="pig" cx="0.5" cy="0.5" r="0.6"><stop offset="0" stop-color="#2fa0e0"/><stop offset="1" stop-color="#1a2b8a"/></radialGradient>
</defs>
<use href="#ribbon" x="812" y="246"/>
<use href="#ribbon" x="843.5" y="245.5"/>
<use href="#ribbon2" x="905" y="245"/>
<use href="#ribbon" x="936" y="246"/>
<use href="#ribbon" x="967" y="246"/>
<use href="#ribbon" x="812" y="277"/>
<use href="#ribbon2" x="843.5" y="276"/>
<!-- portrait -->
<defs><linearGradient id="ring" x1="0" y1="0" x2="1" y2="1"><stop offset="0" stop-color="#f0f0f0"/><stop offset="0.35" stop-color="#8a8a8a"/><stop offset="0.6" stop-color="#e8e8e8"/><stop offset="1" stop-color="#6a6a6a"/></linearGradient></defs>
<circle cx="886" cy="249.5" r="12.2" fill="url(#ring)" stroke="#555" stroke-width="0.8"/>
<circle cx="886" cy="249.5" r="7.8" fill="#e6e6e6" stroke="#666" stroke-width="0.7"/>
<circle cx="886" cy="246.8" r="3" fill="#e6e6e6" stroke="#555" stroke-width="1"/>
<path d="M880.5 258.5 Q880.5 251.5 886 251.5 Q891.5 251.5 891.5 258.5" fill="#e6e6e6" stroke="#555" stroke-width="1"/>
<!-- newspaper -->
<rect x="874.5" y="274" width="23" height="13.5" rx="1" fill="#111" stroke="none"/>
<g stroke="#e6e6e6" stroke-width="0.8"><path d="M877 277h4M877 279h4M877 281h4M877 283h4M884 276h4M884 279h4M884 282h4M891 277h4M891 279h4M891 281h4M891 283h4"/></g>
<!-- splatter -->
<ellipse cx="919.5" cy="275.5" rx="2.5" ry="4" fill="#b7d35a" stroke="none" transform="rotate(25 919.5 275.5)"/>
<path d="M913 283 l4 -4 l1.5 1.5 l-4 4 z" fill="#4a3b34" stroke="none"/>
<path d="M922 286 l3 -4 l2.5 1 l-3.5 4.5 z" fill="#d83a3a" stroke="none"/>
<path d="M908 277 l3-3" stroke="#bdbdbd" stroke-width="0.8"/>
<!-- dna -->
<path d="M940 290 L957 271" stroke="#e4ec3a" stroke-width="11" stroke-linecap="round" filter="url(#blur2)"/>
<path d="M940 290 L957 271" stroke="#e8ee3c" stroke-width="8" stroke-linecap="round"/>
<g stroke="#b8141a" stroke-width="1.8" fill="#d4ead0">
<ellipse cx="955.5" cy="273.5" rx="5" ry="3.6" transform="rotate(-40 955.5 273.5)"/>
<ellipse cx="948" cy="281.5" rx="5.2" ry="3.6" transform="rotate(-40 948 281.5)"/>
<ellipse cx="941" cy="289" rx="4.6" ry="3" transform="rotate(-40 941 289)"/>
</g>
<g stroke="#6aa06a" stroke-width="0.8"><path d="M953 272 l4 3 M945.5 280 l4.5 3 M939 287.5 l3.5 3"/></g>
<!-- pi symbol -->
<rect x="965.5" y="266.5" width="28" height="29" fill="#e6e6e6" stroke="#111" stroke-width="1.2"/>
<use href="#SIL" fill="#10186a" transform="translate(967.5 268.5) scale(0.106 0.104) translate(-396.4 -369)"/>
<use href="#SIL" fill="#1a6ed0" transform="translate(970 271) scale(0.085 0.08) translate(-396.4 -369)" filter="url(#blur2)" opacity="0.8"/>
<use href="#PI" fill="#f8f0c8" stroke="#f8f0c8" stroke-width="4" transform="translate(967.5 268.5) scale(0.106 0.104) translate(-396.4 -369)"/>
<!-- bottom toolbar icons -->
<g fill="#cfcfcf" stroke="none">
<rect x="814.5" y="304" width="1.6" height="8.5"/><rect x="817.5" y="304" width="1.6" height="8.5"/>
<path d="M820.5 304.5 L822 304 L826.5 312.5 L825 313 Z"/>
<rect x="827.5" y="312" width="1.5" height="1.5"/>
</g>
<path d="M894.5 303 V308.5 H900 M898 306.3 L900.5 308.5 L898 310.7" stroke="#cfcfcf" stroke-width="1.4"/>
<path d="M913.5 307.5 h-1 a2.3 2.3 0 0 0 0 4.6 h2.5 M921 307.5 h1.5 a2.3 2.3 0 0 1 0 4.6 h-2.5 M912 304 l11 11" stroke="#6d6d6d" stroke-width="1.2"/>
<rect x="938.5" y="303.5" width="10" height="10" stroke="#cfcfcf" stroke-width="1.1"/>
<path d="M940.5 306.5 h6 M940.5 308.5 h6 M940.5 310.5 h6" stroke="#cfcfcf" stroke-width="0.9"/>
<path d="M965 303.5 H973 V313.5 H965 Z" fill="#cfcfcf" stroke="none"/>
<path d="M963 305.5 H967 V309.5 H963Z" fill="#535353" stroke="none"/>
<path d="M987.5 305.5 H997.5 M990.5 305.5 V304 H994.5 V305.5 M988.8 306.5 V314 H996.2 V306.5 M991.3 308 V312.5 M993.7 308 V312.5" stroke="#cfcfcf" stroke-width="1.1"/>
<path d="M1014.5 225 l2.8-2.6 l2.8 2.6 M1014.5 291 l2.8 2.6 l2.8 -2.6" stroke="#aaaaaa" stroke-width="1"/>
<rect x="907" y="321" width="16" height="1.5" fill="#5e5e5e" stroke="none"/>

<!-- control bar -->
<polyline points="215.5,40.5 219,44 215.5,47.5" stroke="#dedede" stroke-width="1.6"/>
<circle cx="251" cy="44.3" r="7.6" fill="#c9c9c9" stroke="none"/>
<circle cx="251" cy="44.3" r="5.8" fill="none" stroke="#8c8c8c" stroke-width="0.9"/>
<g stroke="#8a8a8a" stroke-width="1.1">
<line x1="251" y1="38.5" x2="251" y2="42.6"/><line x1="251" y1="46" x2="251" y2="50.1"/>
<line x1="245.2" y1="44.3" x2="249.3" y2="44.3"/><line x1="252.7" y1="44.3" x2="256.8" y2="44.3"/>
<line x1="246.9" y1="40.2" x2="249.8" y2="43.1"/><line x1="252.2" y1="45.5" x2="255.1" y2="48.4"/>
<line x1="255.1" y1="40.2" x2="252.2" y2="43.1"/><line x1="249.8" y1="45.5" x2="246.9" y2="48.4"/>
</g>
<circle cx="251" cy="44.3" r="1.3" fill="#333" stroke="none"/>
<rect x="282" y="39.3" width="10.5" height="10.5" stroke="#bdbdbd" stroke-width="0.8"/>
<g fill="#d6d6d6" stroke="none">
<rect x="281" y="38.3" width="2" height="2"/><rect x="286.3" y="38.3" width="2" height="2"/><rect x="291.5" y="38.3" width="2" height="2"/>
<rect x="281" y="43.6" width="2" height="2"/><rect x="291.5" y="43.6" width="2" height="2"/>
<rect x="281" y="48.8" width="2" height="2"/><rect x="286.3" y="48.8" width="2" height="2"/><rect x="291.5" y="48.8" width="2" height="2"/>
</g>
<polyline points="296,43.5 299,46.5 302,43.5" stroke="#cfcfcf" stroke-width="1.2"/>

<g fill="#cbcbcb" stroke="none">
<!-- align left -->
<rect x="317.8" y="36" width="1.6" height="16.7"/>
<rect x="320.7" y="38" width="7.3" height="5.3"/>
<rect x="320.7" y="45.3" width="12" height="4.7"/>
<!-- align hcenter -->
<rect x="349.5" y="36" width="1.3" height="16.7"/>
<rect x="346" y="38" width="8" height="5.3"/>
<rect x="343.3" y="45.3" width="13.5" height="4.7"/>
<!-- align right -->
<rect x="381.5" y="36" width="1.6" height="16.7"/>
<rect x="372.5" y="38" width="7.5" height="5.3"/>
<rect x="367.8" y="45.3" width="12.2" height="4.7"/>
<!-- align top -->
<rect x="394.7" y="36" width="17.7" height="1.6"/>
<rect x="397.5" y="38.7" width="4.8" height="12.3"/>
<rect x="404" y="38.7" width="4.7" height="7.3"/>
<!-- align vcenter -->
<rect x="419.5" y="43.5" width="17.5" height="1.4"/>
<rect x="422.5" y="38" width="4.8" height="12.3"/>
<rect x="429.3" y="40" width="4.8" height="8.5"/>
<!-- align bottom -->
<rect x="443.5" y="51.2" width="17.3" height="1.6"/>
<rect x="446.5" y="38" width="4.8" height="12.3"/>
<rect x="453.3" y="42.3" width="4.8" height="8.3"/>
<!-- dist top -->
<rect x="472" y="36" width="18" height="1.5"/>
<rect x="472" y="44.5" width="18" height="1.5"/>
<rect x="475" y="38.5" width="12" height="4"/>
<rect x="475" y="47" width="12" height="4.5"/>
<!-- dist vcenter -->
<rect x="496.8" y="39.5" width="18" height="1.3"/>
<rect x="496.8" y="48" width="18" height="1.3"/>
<rect x="500" y="37.5" width="11.5" height="4.7"/>
<rect x="500" y="46" width="11.5" height="4.7"/>
<!-- dist bottom -->
<rect x="521.6" y="43" width="18" height="1.5"/>
<rect x="521.6" y="51.2" width="18" height="1.5"/>
<rect x="525" y="37" width="11" height="4.5"/>
<rect x="525" y="45.5" width="11" height="4.5"/>
<!-- dist left -->
<rect x="550.7" y="36" width="1.5" height="17"/>
<rect x="559" y="36" width="1.5" height="17"/>
<rect x="553" y="38.5" width="4.5" height="12"/>
<rect x="561.5" y="40.5" width="4.5" height="8"/>
<!-- dist hcenter -->
<rect x="578.5" y="36" width="1.3" height="17"/>
<rect x="589.5" y="36" width="1.3" height="17"/>
<rect x="576.5" y="38.5" width="5" height="12"/>
<rect x="587.5" y="40.5" width="5" height="8"/>
<!-- dist right -->
<rect x="606.5" y="36" width="1.5" height="17"/>
<rect x="614.5" y="36" width="1.5" height="17"/>
<rect x="600" y="38.5" width="4.5" height="12"/>
<rect x="609" y="40.5" width="4.5" height="8"/>
</g>
<!-- reference point -->
<g stroke="#d0d0d0" stroke-width="1" fill="none">
<rect x="631.5" y="35" width="4" height="4"/><rect x="638.5" y="35" width="4" height="4"/><rect x="645.5" y="35" width="4" height="4"/>
<rect x="631.5" y="42" width="4" height="4"/><rect x="645.5" y="42" width="4" height="4"/>
<rect x="631.5" y="49" width="4" height="4"/><rect x="638.5" y="49" width="4" height="4"/><rect x="645.5" y="49" width="4" height="4"/>
<path d="M635.5 37 H638.5 M642.5 37 H645.5 M635.5 51 H638.5 M642.5 51 H645.5 M633.5 39 V42 M633.5 46 V49 M647.5 39 V42 M647.5 46 V49"/>
</g>
<rect x="638" y="41.5" width="5" height="5" fill="#eeeeee"/>
<!-- spinners -->
<g stroke="#d8d8d8" stroke-width="1.3" fill="none">
<polyline points="679.5,41 683,37.8 686.5,41"/><polyline points="679.5,47.5 683,50.7 686.5,47.5"/>
<polyline points="773,41 776.5,37.8 780,41"/><polyline points="773,47.5 776.5,50.7 780,47.5"/>
<polyline points="875.5,41 879,37.8 882.5,41"/><polyline points="875.5,47.5 879,50.7 882.5,47.5"/>
<polyline points="1006,41 1009.5,37.8 1013,41"/><polyline points="1006,47.5 1009.5,50.7 1013,47.5"/>
</g>
<!-- link broken -->
<g stroke="#cfcfcf" stroke-width="1.6" fill="none">
<path d="M955 42 H953.5 a2.5 2.5 0 0 0 0 5 H956"/>
<path d="M961 42 H963.5 a2.5 2.5 0 0 1 0 5 H960"/>
<line x1="952" y1="38.5" x2="963.5" y2="50"/>
</g>
<!-- grid icon -->
<g fill="#d8d8d8" stroke="none">
<rect x="1104" y="38.7" width="3.6" height="3.6"/><rect x="1110.5" y="38.7" width="3.6" height="3.6"/>
<rect x="1104" y="45.2" width="3.6" height="3.6"/><rect x="1110.5" y="45.2" width="3.6" height="3.6"/>
<rect x="1127" y="38" width="3.5" height="3.5"/><rect x="1127" y="42.7" width="3.5" height="3.5"/><rect x="1127" y="47.4" width="3.5" height="3.5"/>
<rect x="1173" y="40.3" width="2" height="2"/><rect x="1173" y="43.5" width="2" height="2"/><rect x="1173" y="46.7" width="2" height="2"/>
<rect x="1176.5" y="40.8" width="7.5" height="1.2"/><rect x="1176.5" y="44" width="7.5" height="1.2"/><rect x="1176.5" y="47.2" width="7.5" height="1.2"/>
</g>
<path d="M1133.5 41.5 H1137.5 a2.7 2.7 0 0 1 0 5.4 H1133.5" stroke="#d8d8d8" stroke-width="1.6" fill="none"/>
<polyline points="1148,42.3 1151.2,45.3 1154.4,42.3" stroke="#d0d0d0" stroke-width="1.4"/>
</g>
</svg>
</body></html>
